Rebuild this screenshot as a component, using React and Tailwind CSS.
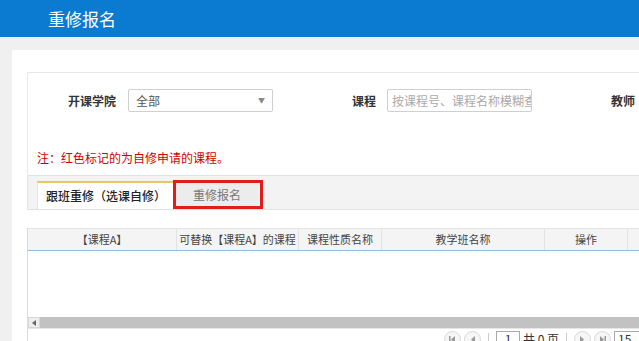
import React from "react";

const cols = [
  { label: "【课程A】", w: "w-[149px]" },
  { label: "可替换【课程A】的课程", w: "w-[122px]" },
  { label: "课程性质名称", w: "w-[83px]" },
  { label: "教学班名称", w: "w-[163px]" },
  { label: "操作", w: "w-[83px]" },
  { label: "", w: "w-[120px]" },
];

const PagerBtn = ({ dir, end }) => (
  <div className="w-[17px] h-[17px] rounded-full border border-[#d8d8d8] bg-[#f6f6f6] flex items-center justify-center">
    <svg width="9" height="9" viewBox="0 0 9 9">
      {dir === "left" ? (
        <>
          {end && <rect x="1" y="1" width="1.5" height="7" fill="#999" />}
          <path d="M7 1 L3 4.5 L7 8 Z" fill="#999" />
        </>
      ) : (
        <>
          <path d="M2 1 L6 4.5 L2 8 Z" fill="#999" />
          {end && <rect x="6.5" y="1" width="1.5" height="7" fill="#999" />}
        </>
      )}
    </svg>
  </div>
);

const App = () => {
  return (
    <div className="w-[639px] h-[341px] overflow-hidden bg-[#f0f0f0] font-['Noto_Sans_CJK_SC',sans-serif] text-[12px] text-[#333]">
      {/* 顶部标题栏 */}
      <div className="h-[37px] bg-[#0a7bd1] flex items-center pl-[48px] text-white text-[17px]">
        重修报名
      </div>
      <div className="h-px bg-[#fafafa]" />

      <div className="pt-[12px] pl-[12px]">
        <div className="w-[820px] bg-white pt-[22px] pl-[15px]">
          {/* 查询条件 */}
          <div className="w-[800px] border border-[#e8e8e8] border-b-[#d6e4ee]">
            <div className="flex items-center h-[23px] mt-[16px]">
              <span className="ml-[40px] w-[60px] font-bold text-[#333]">开课学院</span>
              <div className="w-[145px] h-[23px] border border-[#cfcfcf] rounded-[2px] flex items-center justify-between px-[7px] text-[#555]">
                <span>全部</span>
                <span className="text-[7px] text-[#888]">▼</span>
              </div>
              <span className="ml-[79px] w-[35px] font-bold">课程</span>
              <div className="w-[145px] h-[23px] border border-[#cfcfcf] rounded-[2px] flex items-center pl-[4px] overflow-hidden whitespace-nowrap text-[#aaa]">
                按课程号、课程名称模糊查询
              </div>
              <span className="ml-[79px] font-bold">教师</span>
            </div>
            <div className="mt-[38px] pl-[9px] pb-[9px] text-[#d40000] leading-[16px]">
              注：红色标记的为自修申请的课程。
            </div>
          </div>

          {/* 选项卡 */}
          <div className="w-[800px] h-[34px] bg-[#f3f3f3] border-l border-b border-[#dde3e8] flex items-end pl-[9px]">
            <div className="w-[138px] h-[28px] bg-white border-t-2 border-x border-[#e7c56a] border-x-[#e4e4e4] flex items-center justify-center text-[#222] font-medium">
              跟班重修（选课自修）
            </div>
            <div className="relative ml-[1px] w-[82px] h-[23px] mb-[3px] bg-[#ececec] flex items-center justify-center text-[#777]">
              重修报名
              <div className="absolute -left-[3px] -top-[3px] -right-[5px] -bottom-[3px] border-[3px] border-[#e31b1b]" />
            </div>
          </div>

          {/* 表格 */}
          <div className="mt-[18px] w-[800px] border-l border-[#dcdcdc]">
            <div className="flex h-[23px] bg-[#f4f4f4] border-t border-[#e6e6e6] border-b border-b-[#99bbd8] text-[11px]">
              {cols.map((c, i) => (
                <div
                  key={i}
                  className={`${c.w} shrink-0 border-r border-[#e2e2e2] flex items-center justify-center whitespace-nowrap text-[#444]`}
                >
                  {c.label}
                </div>
              ))}
            </div>
            <div className="h-[66px] bg-white" />
            <div className="h-[11px] bg-[#c2c2c2] flex">
              <div className="w-[12px] h-[11px] bg-[#eeeeee] border border-[#d6d6d6] flex items-center justify-center">
                <svg width="5" height="6" viewBox="0 0 5 6">
                  <path d="M4 0 L0 3 L4 6 Z" fill="#666" />
                </svg>
              </div>
            </div>
            <div className="h-px bg-[#e6e6e6]" />
            <div className="h-[20px] bg-white flex items-center pl-[416px] gap-[3px] text-[#333]">
              <PagerBtn dir="left" end />
              <PagerBtn dir="left" />
              <div className="w-px h-[12px] bg-[#ccc] mx-[4px]" />
              <div className="w-[24px] h-[17px] border border-[#aaa] flex items-center justify-center">1</div>
              <span className="whitespace-nowrap">共 0 页</span>
              <div className="w-px h-[12px] bg-[#ccc] mx-[4px]" />
              <PagerBtn dir="right" />
              <PagerBtn dir="right" end />
              <div className="w-[40px] h-[17px] border border-[#aaa] pl-[3px] flex items-center">15</div>
            </div>
          </div>
        </div>
      </div>
    </div>
  );
};

export default App;
